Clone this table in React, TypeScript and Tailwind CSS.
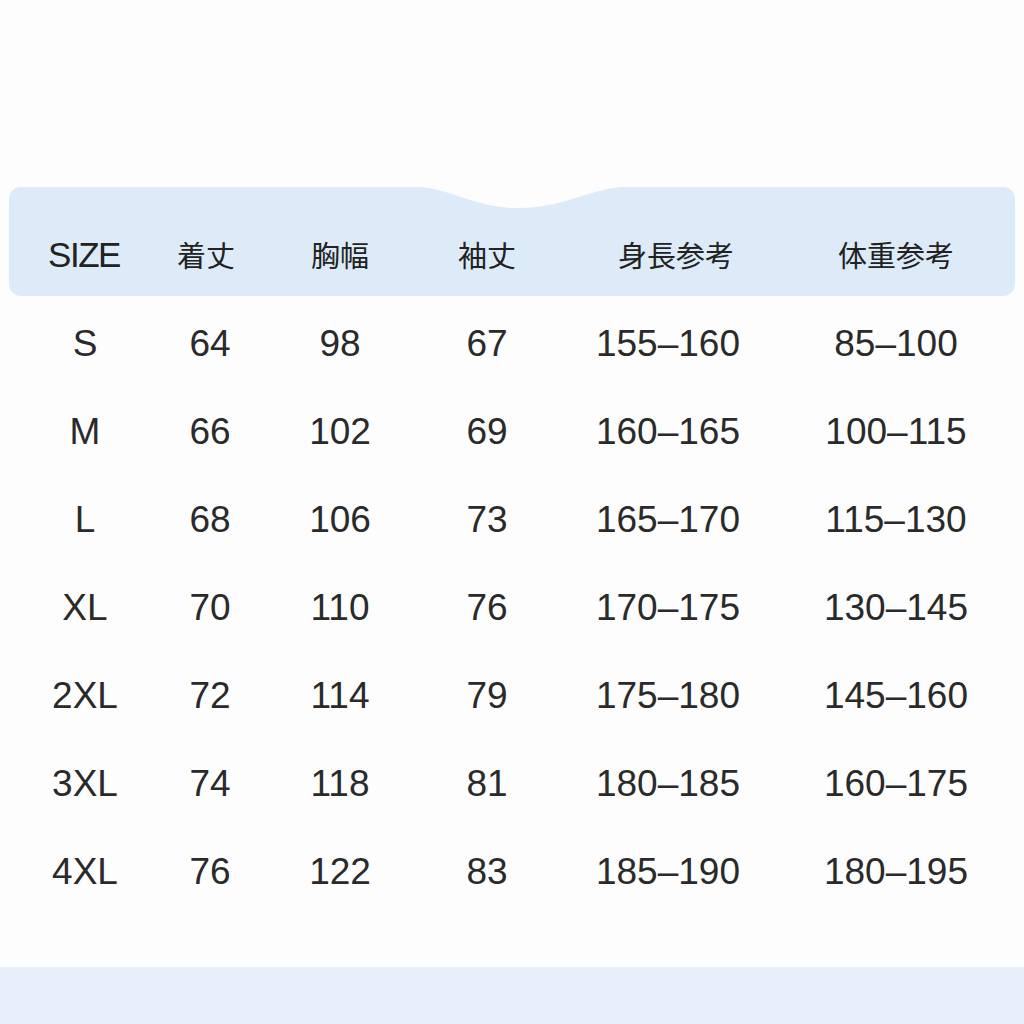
import React from 'react';

const headers = ['SIZE', '着丈', '胸幅', '袖丈', '身長参考', '体重参考'];

const rows: string[][] = [
  ['S', '64', '98', '67', '155–160', '85–100'],
  ['M', '66', '102', '69', '160–165', '100–115'],
  ['L', '68', '106', '73', '165–170', '115–130'],
  ['XL', '70', '110', '76', '170–175', '130–145'],
  ['2XL', '72', '114', '79', '175–180', '145–160'],
  ['3XL', '74', '118', '81', '180–185', '160–175'],
  ['4XL', '76', '122', '83', '185–190', '180–195'],
];

const cols = 'grid grid-cols-[130px_120px_140px_154px_216px_232px]';

const App: React.FC = () => {
  return (
    <div
      className="w-[1024px] h-[1024px] bg-[#fdfdfd] flex flex-col overflow-hidden text-[#2a2a2a]"
      style={{ fontFamily: '"Liberation Sans", "Noto Sans CJK JP", sans-serif' }}
    >
      {/* header band */}
      <div className="relative mt-[187px] mx-[9px] h-[109px] rounded-[12px] bg-[#dcebf7] pt-[40px]">
        {/* notch in the top edge */}
        <svg
          className="absolute left-[411px] top-0 w-[200px] h-[24px]"
          viewBox="0 0 200 24"
          preserveAspectRatio="none"
        >
          <path
            d="M0 -1 L0 0 C30 2 55 20 95 21 C140 22 165 4 200 0 L200 -1 Z"
            fill="#fdfdfd"
          />
        </svg>
        <div className={`${cols} pl-[11px] h-[40px] items-center`}>
          <div className="text-center text-[35px] tracking-[-1.5px] pr-[2px] mt-[2px] text-[#222]">SIZE</div>
          {headers.slice(1).map((h, i) => (
            <div
              key={h}
              className={`text-center text-[29px] text-[#222] ${i === 0 ? 'pr-[8px]' : ''} ${i === 3 ? 'pl-[8px]' : ''}`}
              style={{ fontFamily: '"Noto Sans CJK JP", sans-serif' }}
            >
              {h}
            </div>
          ))}
        </div>
      </div>

      {/* rows */}
      <div className="mt-[3px] pl-[20px]">
        {rows.map((r) => (
          <div key={r[0]} className={`${cols} h-[88px] items-center`}>
            {r.map((c, i) => (
              <div key={i} className={`text-center text-[37px] leading-none ${i === 4 ? 'pr-[8px]' : ''}`}>
                {c}
              </div>
            ))}
          </div>
        ))}
      </div>

      <div className="flex-1" />
      <div className="h-[57px] bg-[#e8effb]" />
    </div>
  );
};

export default App;
